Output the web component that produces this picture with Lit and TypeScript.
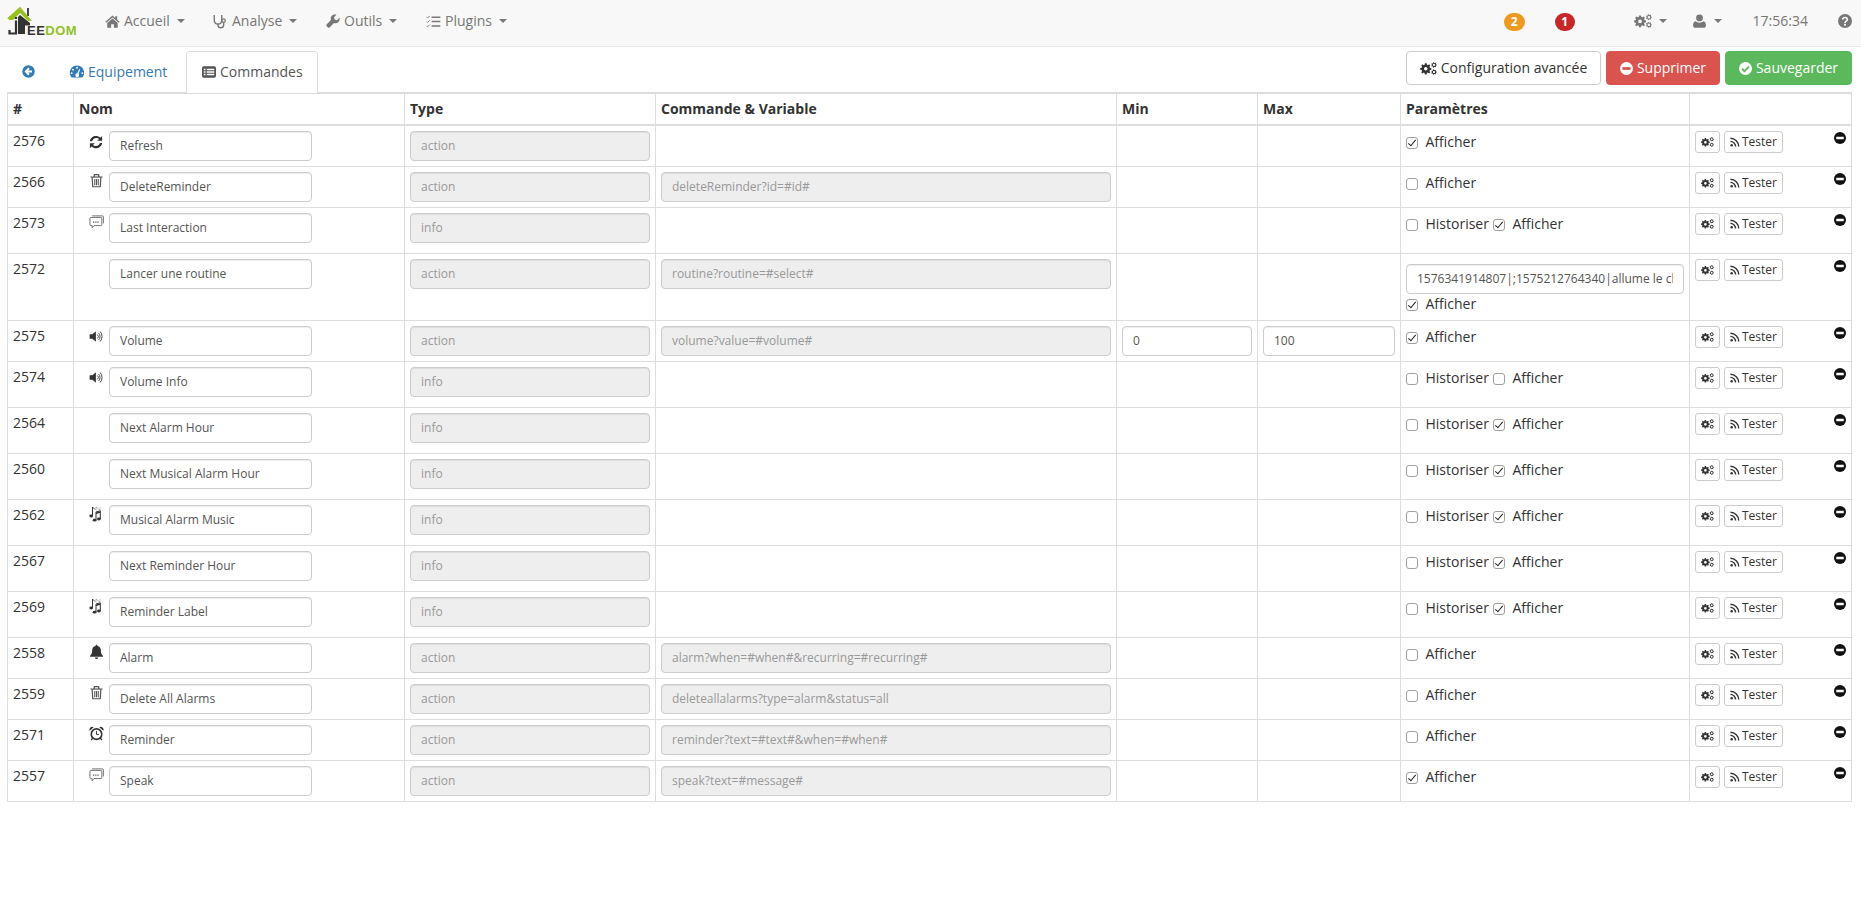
import { LitElement, html, svg, css } from "lit";
import { customElement } from "lit/decorators.js";

function gear(cx: number, cy: number, ro: number, ri: number, hole: number, teeth = 8): string {
  let d = "";
  const step = (Math.PI * 2) / teeth;
  for (let i = 0; i < teeth; i++) {
    const a = i * step;
    const pts: [number, number][] = [
      [ri, a - step * 0.36],
      [ro, a - step * 0.2],
      [ro, a + step * 0.2],
      [ri, a + step * 0.36],
    ];
    for (const [r, t] of pts) {
      d += (d ? "L" : "M") + (cx + r * Math.cos(t)).toFixed(2) + " " + (cy + r * Math.sin(t)).toFixed(2);
    }
  }
  d += "Z";
  d += `M${cx - hole} ${cy}a${hole} ${hole} 0 1 0 ${hole * 2} 0a${hole} ${hole} 0 1 0 ${-hole * 2} 0Z`;
  return d;
}
const COGS = gear(8, 10, 8.2, 6.2, 2.6) + gear(20, 4.3, 4, 3, 1.7, 7) + gear(20, 14.7, 4, 3, 1.7, 7);

const ico = (w: number, h: number, body: unknown, vb = "0 0 24 24") =>
  html`<svg class="i" width=${w} height=${h} viewBox=${vb} fill="currentColor">${body}</svg>`;

const icons = {
  home: (s = 16) => ico(s, s, svg`<path d="M12 2.5 0.6 12.4l1.4 1.6L12 5.4l10 8.6 1.4-1.6L19.5 9V3.5h-3.2v2.7z"/><path d="M12 7.2 3.6 14.4V22h6.2v-5.6h4.4V22h6.2v-7.6z"/>`),
  steth: (s = 16) => ico(s, s, svg`<path d="M3 2.5H2v7c0 4 2.7 6.5 6 6.5s6-2.500 6-6.500v-7h-1" fill="none" stroke="currentColor" stroke-width="2.200"/><path d="M8 16v1.500c0 2.500 2 4.500 4.500 4.500s4.500-2 4.500-4.500V13" fill="none" stroke="currentColor" stroke-width="2.200"/><circle cx="17" cy="10.500" r="2.700" fill="none" stroke="currentColor" stroke-width="2"/>`),
  wrench: (s = 16) => ico(s, s, svg`<path d="M23 6.500l-4.200 4.100-3.900-1.300-1.200-3.800L18 1.300c-2.800-1-6-.3-8 1.700-2 2-2.500 4.800-1.500 7.300L1.400 17.400a2.600 2.600 0 0 0 0 3.700l1.500 1.500a2.600 2.600 0 0 0 3.700 0l7.100-7.100c2.500 1 5.400.4 7.300-1.500 2-2 2.800-5 2-7.500z"/>`),
  plugins: (s = 16) => ico(s, s, svg`<path d="M9 5h14M9 12h14M9 19h14" stroke="currentColor" stroke-width="2.400" fill="none"/><path d="M1 5l1.500 1.500L6 3M1 12l1.500 1.500L6 10M1 19l1.500 1.500L6 17" stroke="currentColor" stroke-width="1.400" fill="none"/>`),
  back: (s = 14) => ico(s, s, svg`<circle cx="12" cy="12" r="11.500"/><path d="M13 6l-6 6 6 6M7.500 12H18.500" stroke="#fff" stroke-width="3.400" fill="none"/>`),
  tacho: (w = 16, h = 15) => ico(w, h, svg`<path fill-rule="evenodd" d="M12 2.500C5.700 2.500.5 7.700.5 14c0 2.700 1 5.200 2.600 7.200.3.300.6.500 1 .5h15.800c.4 0 .7-.2 1-.5 1.600-2 2.600-4.500 2.600-7.200C23.500 7.700 18.300 2.500 12 2.500zM12 4.500a1.500 1.500 0 1 1 0 3 1.500 1.500 0 0 1 0-3zM5.500 7.500a1.500 1.500 0 1 1 0 3 1.500 1.500 0 0 1 0-3zM3.500 13a1.500 1.500 0 1 1 0 3 1.500 1.500 0 0 1 0-3zM20.500 13a1.500 1.500 0 1 1 0 3 1.500 1.500 0 0 1 0-3zM15.500 8l1.500.7-2.600 7.100c.6.500 1 1.200 1 2a3 3 0 1 1-3-2.900z"/>`),
  listAlt: (s = 14) => ico(s, s, svg`<path fill-rule="evenodd" d="M3 2h18a3 3 0 0 1 3 3v14a3 3 0 0 1-3 3H3a3 3 0 0 1-3-3V5a3 3 0 0 1 3-3zM3 6.500v2.500h3V6.500zM8 6.500v2.500h13V6.500zM3 10.800v2.500h3v-2.500zM8 10.800v2.500h13v-2.500zM3 15v2.500h3V15zM8 15v2.500h13V15z"/>`),
  cogs: (w = 16) => ico(w, Math.round((w * 19) / 24), svg`<path fill-rule="evenodd" d=${COGS}/>`, "0 0 24 19"),
  minus: (s = 14) => ico(s, s, svg`<circle cx="12" cy="12" r="12"/><rect x="4.500" y="9.500" width="15" height="5" fill="#fff"/>`),
  minusRed: (s = 13) => ico(s, s, svg`<circle cx="12" cy="12" r="12"/><rect x="4.500" y="9.500" width="15" height="5" fill="#d9534f"/>`),
  check: (s = 13) => ico(s, s, svg`<circle cx="12" cy="12" r="12"/><path d="M5.500 12.500l4.500 4.500 8.500-8.500" stroke="#5cb85c" stroke-width="3.400" fill="none"/>`),
  user: () => ico(13, 14, svg`<circle cx="12" cy="6.800" r="5.800"/><path d="M5 12.500c1.800 1.600 4.200 2.300 7 2.300s5.200-.7 7-2.300c2.600.3 4 3 4 7 0 2.500-1.500 4-3.700 4H4.700C2.500 23.500 1 22 1 19.500c0-4 1.400-6.700 4-7z"/>`, "1 0 22 24"),
  help: (s = 14) => ico(s, s, svg`<circle cx="12" cy="12" r="12"/><path d="M8 9.500c0-2.200 1.800-3.500 4-3.500s4 1.400 4 3.300c0 3.200-4 2.800-4 6" stroke="#f8f8f8" stroke-width="2.900" fill="none"/><rect x="10.400" y="16.800" width="3.200" height="3.200" fill="#f8f8f8"/>`),
  rss: (s = 10) => ico(s, s, svg`<circle cx="4" cy="20" r="3"/><path d="M1 10.500a12.500 12.500 0 0 1 12.500 12.500M1 3a20 20 0 0 1 20 20" fill="none" stroke="currentColor" stroke-width="3.400"/>`),
  refresh: (s = 14) => ico(s, s, svg`<path d="M1.500 10.500C2.300 5 6.700 1.500 12 1.500c3 0 5.500 1.100 7.400 3L22.500 1.500V10h-8.500l3.200-3.200C15.900 5.600 14.200 5 12.300 5.200 9 5.500 6.300 7.500 5.300 10.500z"/><path d="M22.500 13.500C21.700 19 17.300 22.500 12 22.500c-3 0-5.500-1.100-7.400-3L1.500 22.500V14h8.500l-3.200 3.200c1.300 1.200 3 1.800 4.900 1.600 3.300-.3 6-2.300 7-5.300z"/>`),
  trash: (s = 15) => ico(s, s, svg`<g fill="none" stroke="currentColor" stroke-width="1.900"><path d="M5 7l1 15h12l1-15"/><path d="M2.500 6.500h19"/><path d="M8.500 6.500V2.500h7v4"/></g><path d="M9.200 9.500v10M12 9.500v10M14.800 9.500v10" stroke="currentColor" stroke-width="1.700"/>`),
  comment: (s = 15) => ico(s, s, svg`<g fill="none" stroke="currentColor" stroke-width="1.300"><path d="M3 5.500h16a1.500 1.500 0 0 1 1.500 1.500v10a1.500 1.500 0 0 1-1.500 1.500H8L5 22v-3.500H3A1.500 1.500 0 0 1 1.500 17V7A1.500 1.500 0 0 1 3 5.500z"/><path d="M5 3h16.500A1.500 1.500 0 0 1 23 4.500V15"/></g><path d="M6.500 12h2v2h-2zM10 12h2v2h-2zM13.500 12h2v2h-2z"/>`),
  volume: (s = 15) => ico(s, s, svg`<path d="M1 8.500h4.500L11 3.500v17l-5.500-5H1z"/><path d="M13.500 9a4 4 0 0 1 0 6M15.500 6.500a8 8 0 0 1 0 11M17.800 4a12 12 0 0 1 0 16" fill="none" stroke="currentColor" stroke-width="1.400"/>`),
  music: () => ico(12, 16, svg`<ellipse cx="2.200" cy="10" rx="1.900" ry="1.400"/><path d="M3.500 10V1" stroke="currentColor" stroke-width="1" fill="none"/><path d="M3.500 1l2.500 2.500" stroke="currentColor" stroke-width=".9" fill="none"/><ellipse cx="5.600" cy="14.200" rx="1.900" ry="1.400"/><ellipse cx="9.900" cy="13" rx="1.900" ry="1.400"/><path d="M7 14.200V6l4.300-1.200V13" stroke="currentColor" stroke-width="1" fill="none"/><path d="M7 7.300l4.300-1.200" stroke="currentColor" stroke-width="1.500" fill="none"/><path d="M7 1v3.500M7 1l4 3.300V1" stroke="currentColor" stroke-width=".6" fill="none" opacity=".55"/>`, "0 0 12 16"),
  bell: (s = 15) => ico(s, s, svg`<path d="M12 1a1.500 1.500 0 0 1 1.500 1.500v.7c3.600.7 5.500 3.400 5.500 7 0 5 1.500 7 3.500 8.800V20.500h-21v-1.500C3.500 17.200 5 15.200 5 10.200c0-3.600 1.900-6.300 5.500-7v-.7A1.500 1.500 0 0 1 12 1z"/><path d="M9.500 21.500h5a2.500 2.500 0 0 1-5 0z"/>`),
  alarm: (s = 15) => ico(s, s, svg`<circle cx="12" cy="13" r="8.400" fill="none" stroke="currentColor" stroke-width="2.600"/><path d="M12 8v5.500h4" fill="none" stroke="currentColor" stroke-width="1.500"/><path d="M1 7.500A4.500 4.500 0 0 1 7.500 2zM23 7.500A4.500 4.500 0 0 0 16.500 2z"/><path d="M6 19l-2.500 3.500M18 19l2.500 3.500" stroke="currentColor" stroke-width="2"/>`),
};

type RowIcon = "refresh" | "trash" | "comment" | "volume" | "music" | "bell" | "alarm" | "";
interface Row {
  id: number;
  name: string;
  type: string;
  cmd?: string;
  min?: string;
  max?: string;
  long?: string;
  hist?: boolean;
  show: boolean;
  icon: RowIcon;
  size: "n" | "t" | "x";
}

const ROWS: Row[] = [
  { id: 2576, name: "Refresh", type: "action", show: true, icon: "refresh", size: "n" },
  { id: 2566, name: "DeleteReminder", type: "action", cmd: "deleteReminder?id=#id#", show: false, icon: "trash", size: "n" },
  { id: 2573, name: "Last Interaction", type: "info", hist: false, show: true, icon: "comment", size: "t" },
  { id: 2572, name: "Lancer une routine", type: "action", cmd: "routine?routine=#select#", long: "1576341914807|;1575212764340|allume le chauffage", show: true, icon: "", size: "x" },
  { id: 2575, name: "Volume", type: "action", cmd: "volume?value=#volume#", min: "0", max: "100", show: true, icon: "volume", size: "n" },
  { id: 2574, name: "Volume Info", type: "info", hist: false, show: false, icon: "volume", size: "t" },
  { id: 2564, name: "Next Alarm Hour", type: "info", hist: false, show: true, icon: "", size: "t" },
  { id: 2560, name: "Next Musical Alarm Hour", type: "info", hist: false, show: true, icon: "", size: "t" },
  { id: 2562, name: "Musical Alarm Music", type: "info", hist: false, show: true, icon: "music", size: "t" },
  { id: 2567, name: "Next Reminder Hour", type: "info", hist: false, show: true, icon: "", size: "t" },
  { id: 2569, name: "Reminder Label", type: "info", hist: false, show: true, icon: "music", size: "t" },
  { id: 2558, name: "Alarm", type: "action", cmd: "alarm?when=#when#&recurring=#recurring#", show: false, icon: "bell", size: "n" },
  { id: 2559, name: "Delete All Alarms", type: "action", cmd: "deleteallalarms?type=alarm&status=all", show: false, icon: "trash", size: "n" },
  { id: 2571, name: "Reminder", type: "action", cmd: "reminder?text=#text#&when=#when#", show: false, icon: "alarm", size: "n" },
  { id: 2557, name: "Speak", type: "action", cmd: "speak?text=#message#", show: true, icon: "comment", size: "n" },
];

@customElement("app-root")
export class AppRoot extends LitElement {
  static styles = css`
    :host { display: block; font-family: "Open Sans", sans-serif; font-size: 14px; line-height: 20px; color: #333; background: #fff; min-height: 899px; }
    * { box-sizing: border-box; }
    .i { display: block; flex: none; }
    .nav { height: 47px; background: #f8f8f8; border-bottom: 1px solid #e7e7e7; display: flex; align-items: center; color: #777; padding-bottom: 4px; }
    .logo { width: 105px; height: 42px; display: flex; align-items: flex-end; padding: 0 0 5.5px 7px; flex: none; }
    .logo svg { margin-bottom: 1px; }
    .logo span { font: bold 13px/13px "Liberation Sans", sans-serif; letter-spacing: .5px; color: #333; margin-left: -6px; position: relative; }
    .logo b { color: #94c11f; }
    .menu { display: flex; align-items: center; gap: 4px; flex: none; }
    .menu.m1 { width: 108px; }
    .menu.m2 { width: 113px; }
    .menu.m3 { width: 100px; }
    .caret { width: 0; height: 0; border-top: 4px solid currentColor; border-left: 4px solid transparent; border-right: 4px solid transparent; margin-left: 3px; flex: none; }
    .right { margin-left: auto; display: flex; align-items: center; padding-right: 9px; }
    .badge { width: 21px; height: 18px; margin-top: 2px; border-radius: 10px; color: #fff; font-size: 12px; font-weight: 700; line-height: 18px; text-align: center; }
    .orange { background: #ec9a20; margin-right: 30px; }
    .red { background: #c62828; margin-right: 59px; width: 20px; }
    .tool { display: flex; align-items: center; gap: 3px; }
    .tool.t1 { margin-right: 26px; gap: 4px; }
    .tool.t2 { margin-right: 31px; gap: 5px; }
    .time { margin-right: 30px; }
    .bar { display: flex; justify-content: space-between; padding: 4px 9px 0 7px; height: 46px; }
    .tabs { display: flex; align-items: stretch; height: 41px; color: #337ab7; }
    .tab { display: flex; align-items: center; gap: 3px; }
    .t-back { width: 42px; padding-left: 15px; }
    .t-eq { width: 137px; padding-left: 20px; }
    .t-cmd { width: 132px; padding: 0 0 2px 15px; gap: 4px; color: #555; background: #fff; border: 1px solid #ddd; border-bottom: 0; border-radius: 4px 4px 0 0; height: 42px; position: relative; z-index: 1; }
    .actions { display: flex; gap: 5px; }
    .btn { height: 34px; border-radius: 4px; border: 1px solid #ccc; display: flex; align-items: center; justify-content: center; gap: 4px; font-size: 14px; background: #fff; color: #333; }
    .b1 { width: 195px; }
    .b2 { width: 114px; background: #d9534f; border-color: #d9534f; color: #fff; }
    .b3 { width: 127px; background: #5cb85c; border-color: #5cb85c; color: #fff; }
    .wrap { padding: 0 10px 0 7px; }
    table { width: 100%; table-layout: fixed; border-collapse: collapse; border-top: 2px solid #ddd; margin-top: -1px; }
    th, td { border: 1px solid #ddd; padding: 5px; text-align: left; vertical-align: top; font-weight: 400; }
    th { font-weight: 700; height: 31px; border-bottom: 2px solid #ddd; border-top: 0; }
    tr.n td { height: 41px; }
    tr.t td { height: 46px; }
    tr.x td { height: 67px; }
    .name { display: flex; align-items: flex-start; padding-left: 10px; }
    .ic { width: 20px; height: 20px; flex: none; display: flex; align-items: center; padding-top: 1px; color: #333; }
    .ic.up { padding: 0 0 3px; }
    .ic.soft { color: #555; }
    input.fc { display: block; width: 100%; height: 30px; border: 1px solid #ccc; border-radius: 4px; padding: 4px 10px 6px; font: 12px/18px "Open Sans", sans-serif; color: #555; background: #fff; box-shadow: inset 0 1px 1px rgba(0,0,0,.075); outline: none; }
    input.fc:disabled { background: #eee; color: #999; opacity: 1; }
    .name input.fc { width: 203px; }
    .long { margin-top: 5px; }
    input.cb { appearance: none; -webkit-appearance: none; width: 12px; height: 12px; margin: 0 7.500px 0 0; border: 1px solid #a0a0a0; border-radius: 3px; background: #fff; position: relative; top: 1px; flex: none; }
    input.cb:checked::after { content: ""; position: absolute; left: 3px; top: 0; width: 3px; height: 7px; border: solid #222; border-width: 0 1.800px 1.800px 0; transform: rotate(40deg); }
    .par { display: flex; align-items: center; padding-top: 1px; }
    .par span { margin-right: 4px; }
    .long + .par { padding-top: 0; }
    .ops { display: flex; gap: 4px; position: relative; }
    .xb { height: 22px; border: 1px solid #ccc; border-radius: 3px; background: #fff; display: flex; align-items: center; font-size: 12px; line-height: 18px; color: #333; }
    .xg { width: 25px; justify-content: center; }
    .xt { width: 59px; padding-left: 5px; gap: 2px; }
    .rm { position: absolute; left: 139px; top: 1px; color: #111; }
  `;

  private checkbox(on: boolean) {
    return html`<input class="cb" type="checkbox" .checked=${on} />`;
  }

  private row(r: Row) {
    const iconFn = r.icon ? (icons[r.icon] as (s?: number) => unknown) : null;
    const soft = r.icon === "trash" || r.icon === "comment";
    const up = soft || r.icon === "music" || r.icon === "bell" || r.icon === "alarm";
    return html`<tr class=${r.size}>
      <td>${r.id}</td>
      <td><div class="name"><div class="ic ${soft ? "soft" : ""} ${up ? "up" : ""}">${iconFn ? iconFn() : ""}</div><input class="fc" .value=${r.name} /></div></td>
      <td><input class="fc" disabled .value=${r.type} /></td>
      <td>${r.cmd ? html`<input class="fc" disabled .value=${r.cmd} />` : ""}</td>
      <td>${r.min ? html`<input class="fc" .value=${r.min} />` : ""}</td>
      <td>${r.max ? html`<input class="fc" .value=${r.max} />` : ""}</td>
      <td>
        ${r.long ? html`<input class="fc long" .value=${r.long} />` : ""}
        <div class="par">
          ${r.hist !== undefined ? html`${this.checkbox(r.hist)}<span>Historiser</span>` : ""}
          ${this.checkbox(r.show)}<span>Afficher</span>
        </div>
      </td>
      <td>
        <div class="ops">
          <div class="xb xg">${icons.cogs(13)}</div>
          <div class="xb xt">${icons.rss(10)}Tester</div>
          <div class="rm">${icons.minus(12)}</div>
        </div>
      </td>
    </tr>`;
  }

  render() {
    return html`
      <div class="nav">
        <div class="logo">
          <svg class="i" width="26" height="30" viewBox="0 0 26 30">
            <rect x="20" y="2" width="2" height="8" fill="#444"/>
            <path d="M11 11l2-2 10 8v2.500H18V28H11z" fill="#333"/>
            <path d="M.3 12.300 13 .7l11.700 14-3.700.3L13 7l-7 7H2.500z" fill="#94c11f"/>
            <path d="M9 14.500V27.500H2.500V24" fill="none" stroke="#333" stroke-width="2.200"/>
            <rect x="7.900" y="11" width="2.200" height="2" fill="#333"/>
          </svg>
          <span>EE<b>DOM</b></span>
        </div>
        <div class="menu m1">${icons.home(15)}Accueil<i class="caret"></i></div>
        <div class="menu m2">${icons.steth(15)}Analyse<i class="caret"></i></div>
        <div class="menu m3">${icons.wrench(14)}Outils<i class="caret"></i></div>
        <div class="menu">${icons.plugins(15)}Plugins<i class="caret"></i></div>
        <div class="right">
          <div class="badge orange">2</div>
          <div class="badge red">1</div>
          <div class="tool t1">${icons.cogs(18)}<i class="caret"></i></div>
          <div class="tool t2">${icons.user()}<i class="caret"></i></div>
          <div class="time">17:56:34</div>
          ${icons.help(14)}
        </div>
      </div>
      <div class="bar">
        <div class="tabs">
          <div class="tab t-back">${icons.back(13)}</div>
          <div class="tab t-eq">${icons.tacho()}Equipement</div>
          <div class="tab t-cmd">${icons.listAlt()}Commandes</div>
        </div>
        <div class="actions">
          <div class="btn b1">${icons.cogs(17)}Configuration avancée</div>
          <div class="btn b2">${icons.minusRed()}Supprimer</div>
          <div class="btn b3">${icons.check()}Sauvegarder</div>
        </div>
      </div>
      <div class="wrap">
        <table>
          <colgroup>
            <col style="width:66px" /><col style="width:331px" /><col style="width:251px" /><col style="width:461px" />
            <col style="width:141px" /><col style="width:143px" /><col style="width:289px" /><col style="width:162px" />
          </colgroup>
          <thead>
            <tr><th>#</th><th>Nom</th><th>Type</th><th>Commande &amp; Variable</th><th>Min</th><th>Max</th><th>Paramètres</th><th></th></tr>
          </thead>
          <tbody>${ROWS.map((r) => this.row(r))}</tbody>
        </table>
      </div>
    `;
  }
}
